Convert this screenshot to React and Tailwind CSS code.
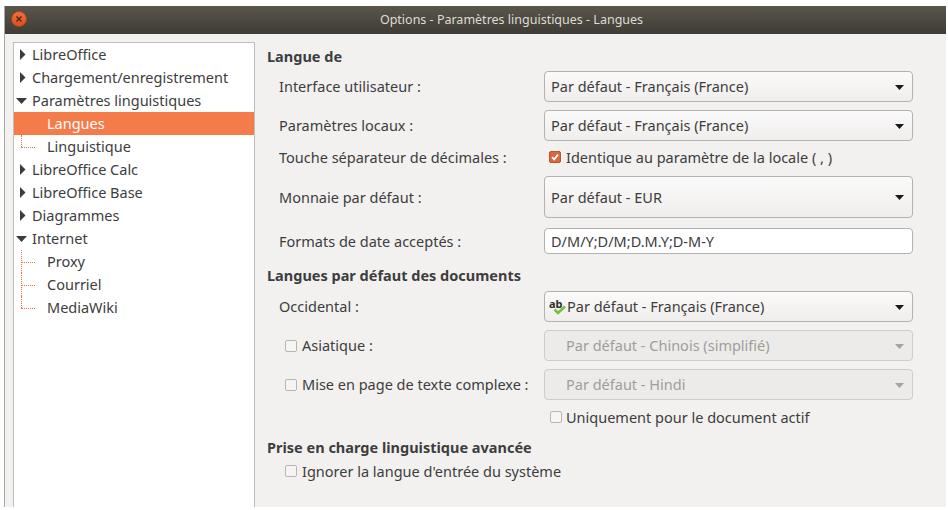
import React from 'react';

const font = "font-['Noto_Sans','Liberation_Sans',sans-serif]";

const Arrow = ({ open }) =>
  open ? (
    <svg width="11" height="11" viewBox="0 0 11 11" className="shrink-0 overflow-visible">
      <path d="M-1 3H10L4.5 9Z" fill="#3c3c3c" />
    </svg>
  ) : (
    <svg width="11" height="11" viewBox="0 0 11 11" className="shrink-0">
      <path d="M3 0V11L8.5 5.5Z" fill="#3c3c3c" />
    </svg>
  );

// dotted connector of a tree child
const TreeLine = ({ last }) => (
  <>
    <span className={`absolute left-[7px] top-0 w-0 border-l border-dotted border-[#e8704a] ${last ? 'h-[12px]' : 'h-[23px]'}`} />
    <span className="absolute left-[7px] top-[12px] w-[14px] border-t border-dotted border-[#e8704a]" />
  </>
);

const TreeParent = ({ label, open }) => (
  <div className="flex h-[23px] items-center pl-[3px]">
    <span className="w-[15px]"><Arrow open={open} /></span>
    <span className="pb-[2px]">{label}</span>
  </div>
);

const TreeChild = ({ label, selected, line, last }) => (
  <div className={`relative flex h-[23px] items-center pl-[33px] ${selected ? 'bg-[#f47b4a] text-white' : ''}`}>
    {line && <TreeLine last={last} />}
    <span className="pb-[2px]">{label}</span>
  </div>
);

const Caret = ({ disabled }) => (
  <svg width="9" height="5" viewBox="0 0 9 5" className="absolute right-[8px] top-1/2 -mt-[2px]">
    <path d="M0 0H9L4.5 5Z" fill={disabled ? '#a3a3a0' : '#1a1a1a'} />
  </svg>
);

const Select = ({ value, h = 'h-[31px]', disabled, pad = 'pl-[6px]', icon }) => (
  <div
    className={`relative flex w-[369px] items-center rounded-[4px] border ${h} ${pad} ${
      disabled
        ? 'border-[#cfcdca] bg-[#ecebe9] text-[#a09e9b]'
        : 'border-[#b5b2ad] bg-gradient-to-b from-[#fbfafa] to-[#efeeec]'
    }`}
  >
    {icon}
    <span className="pb-[1px]">{value}</span>
    <Caret disabled={disabled} />
  </div>
);

const Check = ({ checked }) =>
  checked ? (
    <span className="flex h-[12px] w-[12px] shrink-0 items-center justify-center rounded-[2px] border border-[#b9552c] bg-[#d9683c]">
      <svg width="10" height="10" viewBox="0 0 10 10">
        <path d="M2 5.2L4.2 7.4L8 2.6" fill="none" stroke="#fff" strokeWidth="1.7" />
      </svg>
    </span>
  ) : (
    <span className="h-[12px] w-[12px] shrink-0 rounded-[2px] border border-[#b9b6b1] bg-[#f6f5f4]" />
  );

const SpellIcon = () => (
  <span className="relative mr-[1px] h-[18px] w-[16px] shrink-0">
    <span className="absolute -left-[1px] top-0 text-[11px] font-bold leading-[12px] text-[#2e2e2e]">ab</span>
    <svg width="14" height="10" viewBox="0 0 14 10" className="absolute left-[3px] top-[7px]">
      <path d="M1.5 4.5L5 8L12 1.5" fill="none" stroke="#74bf3c" strokeWidth="2.6" />
    </svg>
  </span>
);

const FormRow = ({ label, h = 'h-[31px]', children }) => (
  <div className={`flex items-center pl-[12px] ${h}`}>
    <span className="w-[265px] pb-[1px]">{label}</span>
    {children}
  </div>
);

const CheckRow = ({ label, children }) => (
  <div className="flex h-[31px] items-center pl-[18px]">
    <Check />
    <span className="ml-[5px] w-[242px] pb-[1px]">{label}</span>
    {children}
  </div>
);

export default function App() {
  return (
    <div className={`h-[510px] w-[948px] overflow-hidden bg-white pl-[4px] pt-[6px] text-[14.5px] leading-[20px] text-[#3d3d3d] ${font}`}>
      <div className="flex h-[501px] w-[942px] flex-col border-l border-[#a9a9a9] bg-[#f2f1f0]">
        <div className="relative flex h-[28px] shrink-0 items-center justify-center bg-gradient-to-b from-[#5a564c] to-[#3e3c36] pl-[72px] text-[12.5px] text-[#dfdbd2]">
          <span className="absolute left-[6px] top-[5px] flex h-[16px] w-[16px] items-center justify-center rounded-full border border-[#b5421a] bg-gradient-to-b from-[#f0703f] to-[#d9501f]">
            <svg width="8" height="8" viewBox="0 0 8 8">
              <path d="M1.5 1.5L6.5 6.5M6.5 1.5L1.5 6.5" stroke="#4a2410" strokeWidth="1.3" />
            </svg>
          </span>
          Options - Paramètres linguistiques - Langues
        </div>

        <div className="flex min-h-0 flex-1">
          <div className="ml-[8px] mt-[8px] w-[242px] shrink-0 border border-b-0 border-[#c2bfba] bg-white">
            <TreeParent label="LibreOffice" />
            <TreeParent label="Chargement/enregistrement" />
            <TreeParent label="Paramètres linguistiques" open />
            <TreeChild label="Langues" selected />
            <TreeChild label="Linguistique" line last />
            <TreeParent label="LibreOffice Calc" />
            <TreeParent label="LibreOffice Base" />
            <TreeParent label="Diagrammes" />
            <TreeParent label="Internet" open />
            <TreeChild label="Proxy" line />
            <TreeChild label="Courriel" line />
            <TreeChild label="MediaWiki" line last />
          </div>

          <div className="ml-[12px] flex-1 pt-[12px]">
            <h2 className="font-bold">Langue de</h2>
            <div className="mt-[5px] flex flex-col gap-[8px]">
              <FormRow label="Interface utilisateur :"><Select value="Par défaut - Français (France)" /></FormRow>
              <FormRow label="Paramètres locaux :"><Select value="Par défaut - Français (France)" /></FormRow>
            </div>
            <div className="mt-[4px] flex h-[24px] items-center pl-[12px]">
              <span className="w-[270px] pb-[1px]">Touche séparateur de décimales :</span>
              <Check checked />
              <span className="ml-[5px] pb-[1px]">Identique au paramètre de la locale ( , )</span>
            </div>
            <div className="mt-[7px]">
              <FormRow label="Monnaie par défaut :" h="h-[42px]"><Select value="Par défaut - EUR" h="h-[42px]" /></FormRow>
            </div>
            <div className="mt-[10px]">
              <FormRow label="Formats de date acceptés :" h="h-[26px]">
                <div className="flex h-[26px] w-[369px] items-center rounded-[4px] border border-[#b5b2ad] bg-white pb-[1px] pl-[6px]">D/M/Y;D/M;D.M.Y;D-M-Y</div>
              </FormRow>
            </div>

            <h2 className="mt-[11px] font-bold">Langues par défaut des documents</h2>
            <div className="mt-[6px] flex flex-col gap-[8px]">
              <FormRow label="Occidental :"><Select value="Par défaut - Français (France)" icon={<SpellIcon />} pad="pl-[5px]" /></FormRow>
              <CheckRow label="Asiatique :"><Select value="Par défaut - Chinois (simplifié)" disabled pad="pl-[21px]" /></CheckRow>
              <CheckRow label="Mise en page de texte complexe :"><Select value="Par défaut - Hindi" disabled pad="pl-[21px]" /></CheckRow>
            </div>
            <div className="mt-[4px] flex h-[26px] items-center pl-[283px]">
              <Check />
              <span className="ml-[4px] pb-[1px]">Uniquement pour le document actif</span>
            </div>

            <h2 className="mt-[7px] font-bold">Prise en charge linguistique avancée</h2>
            <div className="mt-[3px] flex h-[22px] items-center pl-[18px]">
              <Check />
              <span className="ml-[5px] pb-[1px]">Ignorer la langue d'entrée du système</span>
            </div>
          </div>
        </div>
      </div>
    </div>
  );
}
